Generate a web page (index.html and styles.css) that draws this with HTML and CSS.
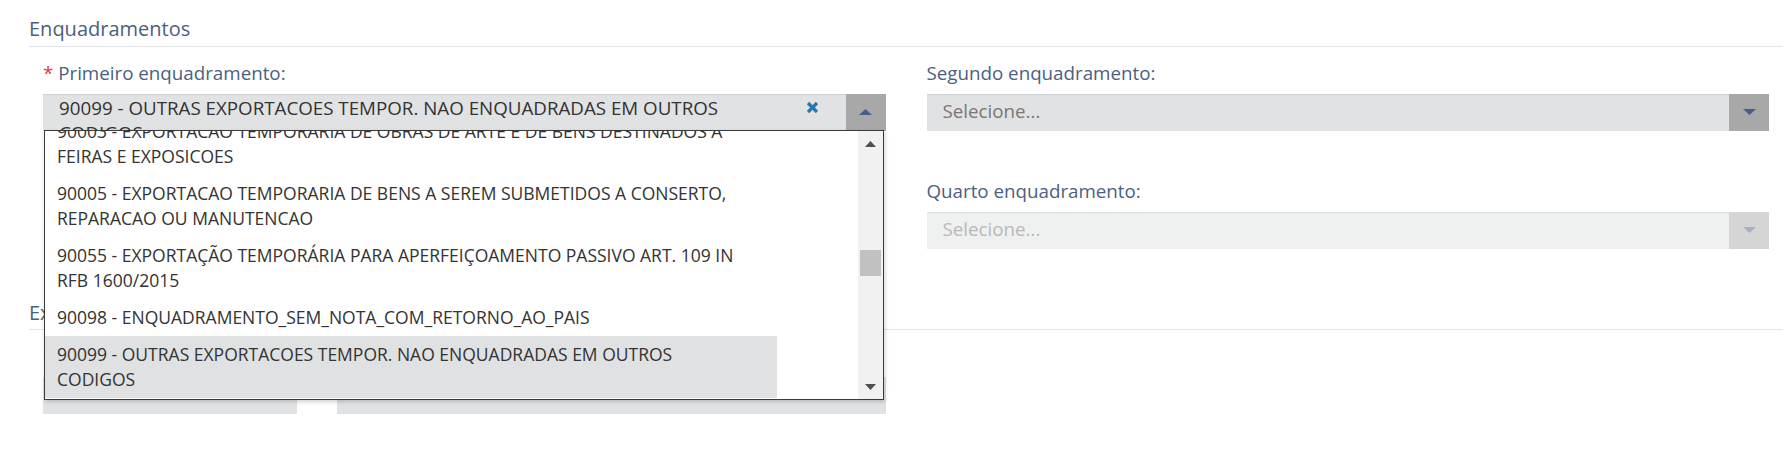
FILE: index.html
```html
<!DOCTYPE html>
<html lang="pt-BR">
<head>
<meta charset="utf-8">
<title>Enquadramentos</title>
<link rel="stylesheet" href="styles.css">
</head>
<body>
<div class="page">
  <section class="section">
    <h2 class="section-title">Enquadramentos</h2>
    <div class="fields">
      <div class="field">
        <label class="label"><span class="req">*</span> Primeiro enquadramento:</label>
        <div class="select-wrap">
          <div class="select">
            <span class="value">90099 - OUTRAS EXPORTACOES TEMPOR. NAO ENQUADRADAS EM OUTROS CODIGOS</span>
            <span class="clear">
              <svg width="13" height="13" viewBox="0 0 13 13"><path d="M2 2 L11 11 M11 2 L2 11" stroke="#1f7cb8" stroke-width="3.2" stroke-linecap="butt"/></svg>
            </span>
            <span class="btn">
              <svg width="13" height="7" viewBox="0 0 13 7"><polygon points="0,6 13,6 6.5,0" fill="#44608a"/></svg>
            </span>
          </div>
          <div class="dropdown">
            <div class="options">
              <div class="option">90003 - EXPORTACAO TEMPORARIA DE OBRAS DE ARTE E DE BENS DESTINADOS A<br>FEIRAS E EXPOSICOES</div>
              <div class="option">90005 - EXPORTACAO TEMPORARIA DE BENS A SEREM SUBMETIDOS A CONSERTO,<br>REPARACAO OU MANUTENCAO</div>
              <div class="option">90055 - EXPORTAÇÃO TEMPORÁRIA PARA APERFEIÇOAMENTO PASSIVO ART. 109 IN<br>RFB 1600/2015</div>
              <div class="option">90098 - ENQUADRAMENTO_SEM_NOTA_COM_RETORNO_AO_PAIS</div>
              <div class="option selected">90099 - OUTRAS EXPORTACOES TEMPOR. NAO ENQUADRADAS EM OUTROS<br>CODIGOS</div>
            </div>
            <div class="scrollbar">
              <svg class="sb-up" width="11" height="6" viewBox="0 0 11 6"><polygon points="0,6 11,6 5.5,0" fill="#505050"/></svg>
              <div class="sb-thumb"></div>
              <svg class="sb-down" width="11" height="6" viewBox="0 0 11 6"><polygon points="0,0 11,0 5.5,6" fill="#505050"/></svg>
            </div>
          </div>
        </div>
      </div>
      <div class="field">
        <label class="label">Segundo enquadramento:</label>
        <div class="select">
          <span class="placeholder">Selecione...</span>
          <span class="btn">
            <svg width="13" height="7" viewBox="0 0 13 7"><polygon points="0,0 13,0 6.5,6" fill="#44608a"/></svg>
          </span>
        </div>
      </div>
      <div class="field field-empty"></div>
      <div class="field">
        <label class="label">Quarto enquadramento:</label>
        <div class="select disabled">
          <span class="placeholder">Selecione...</span>
          <span class="btn">
            <svg width="13" height="7" viewBox="0 0 13 7"><polygon points="0,0 13,0 6.5,6" fill="#a3b2c6"/></svg>
          </span>
        </div>
      </div>
    </div>
  </section>

  <section class="section section-next">
    <h2 class="section-title">Exportação</h2>
    <div class="fields-row">
      <div class="field field-small">
        <label class="label">Quantidade:</label>
        <div class="input"></div>
      </div>
      <div class="field field-wide">
        <label class="label">Unidade:</label>
        <div class="input"></div>
      </div>
    </div>
  </section>
</div>
</body>
</html>
```

FILE: styles.css
```css
* {
  box-sizing: border-box;
}

html, body {
  margin: 0;
  padding: 0;
  background: #ffffff;
}

body {
  font-family: "Open Sans", "Noto Sans", sans-serif;
  color: #333333;
}

.page {
  padding: 0 4px 0 29px;
}

.section-title {
  margin: 15px 0 0;
  font-size: 20px;
  line-height: 28px;
  font-weight: 400;
  color: #4b6080;
  padding-bottom: 3px;
  border-bottom: 1px solid #e4e4e4;
}

.section-next .section-title {
  margin-top: 50px;
  padding-bottom: 2px;
}

.fields {
  display: grid;
  grid-template-columns: 1fr 1fr;
  column-gap: 41px;
  row-gap: 46px;
  padding: 0 14px;
  margin-top: 12px;
}

.field {
  display: flex;
  flex-direction: column;
}

.label {
  display: block;
  font-size: 18.75px;
  line-height: 27px;
  color: #4b6080;
  margin-bottom: 8px;
  white-space: nowrap;
}

.req {
  color: #e0393e;
}

.select-wrap {
  position: relative;
}

.select {
  display: flex;
  height: 37px;
  background: #e1e2e4;
  box-shadow: inset 0 1px 1px rgba(0, 0, 0, 0.08);
}

.select .value {
  flex: 1;
  min-width: 0;
  height: 37px;
  overflow: hidden;
  padding: 1px 0 0 16px;
  font-size: 18.75px;
  line-height: 25px;
  color: #333333;
}

.select .placeholder {
  flex: 1;
  padding: 4px 0 0 16px;
  font-size: 18.75px;
  line-height: 25px;
  color: #777777;
}

.select .clear {
  width: 13px;
  height: 13px;
  margin: 7px 27px 0 14px;
  display: flex;
}

.select .btn {
  width: 40px;
  flex: 0 0 40px;
  background: #a8a8a8;
  display: flex;
  align-items: center;
  justify-content: center;
}

.select.disabled {
  background: #eff0f0;
}

.select.disabled .placeholder {
  color: #b9b9b9;
}

.select.disabled .btn {
  background: #d5d5d5;
}

.dropdown {
  position: absolute;
  z-index: 10;
  top: calc(100% - 1px);
  left: 1px;
  width: 840px;
  height: 270px;
  border: 1px solid #3a3a3a;
  background: #ffffff;
  overflow: hidden;
  box-shadow: 1px 2px 4px rgba(0, 0, 0, 0.18);
}

.options {
  margin-top: -18px;
}

.option {
  width: 732px;
  padding: 6px 12px;
  font-size: 17.5px;
  line-height: 25px;
  color: #333333;
  white-space: nowrap;
}

.option.selected {
  background: #e0e1e3;
}

.scrollbar {
  position: absolute;
  top: 0;
  right: 0;
  bottom: 0;
  width: 25px;
  background: #f1f1f1;
}

.sb-up {
  position: absolute;
  top: 10px;
  left: 7px;
}

.sb-down {
  position: absolute;
  bottom: 9px;
  left: 7px;
}

.sb-thumb {
  position: absolute;
  top: 119px;
  left: 2px;
  width: 21px;
  height: 26px;
  background: #c1c1c1;
}

.fields-row {
  display: flex;
  gap: 40px;
  padding: 0 14px;
  margin-top: 12px;
}

.field-small {
  width: 254px;
}

.field-wide {
  width: 549px;
}

.input {
  height: 37px;
  background: #e1e2e4;
}
```
